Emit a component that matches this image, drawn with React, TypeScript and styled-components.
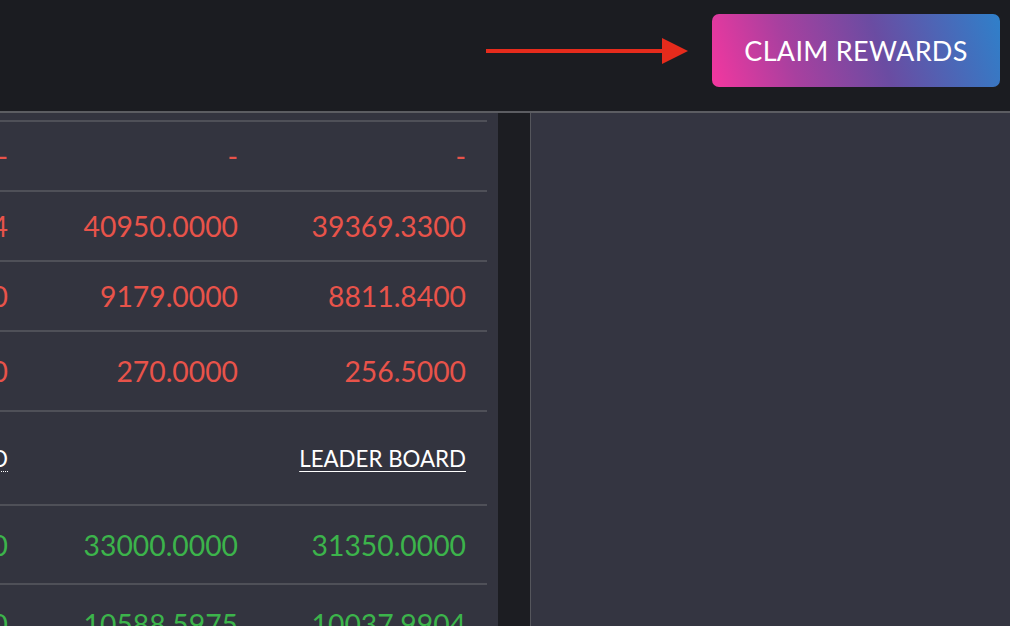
import React from 'react'
import styled, { createGlobalStyle } from 'styled-components'

const GlobalStyle = createGlobalStyle`
    html, body {
        margin: 0;
        padding: 0;
        background: #1b1c21;
        overflow: hidden;
    }
    * {
        box-sizing: border-box;
    }
`

const font = `Lato, 'Open Sans', 'Noto Sans', sans-serif`

const Page = styled.div`
    display: flex;
    flex-direction: column;
    height: 626px;
    font-family: ${font};
`

const Header = styled.header`
    display: flex;
    justify-content: flex-end;
    align-items: flex-start;
    gap: 24px;
    height: 113px;
    padding: 14px 10px 0 0;
    background: #1b1c21;
    border-bottom: 2px solid #5c5d62;
    flex-shrink: 0;
`

const Arrow = styled.svg`
    margin-top: 24px;
    display: block;
`

const ClaimButton = styled.button`
    width: 288px;
    height: 73px;
    border: none;
    border-radius: 7px;
    background: linear-gradient(72deg, #f4379f 0%, #a8409f 28%, #6a4ca2 58%, #2f80ca 100%);
    color: #fff;
    font-family: ${font};
    font-size: 27px;
    font-weight: 400;
    letter-spacing: 0.3px;
    cursor: pointer;
`

const Main = styled.main`
    display: flex;
    flex: 1;
    overflow: hidden;
`

const LeftPanel = styled.section`
    width: 498px;
    padding-right: 11px;
    background: #33343f;
    overflow: hidden;
`

const Gutter = styled.div`
    width: 33px;
    background: #1c1d22;
    border-right: 1px solid #55565c;
`

const RightPanel = styled.section`
    flex: 1;
    background: #343541;
`

const TopEdge = styled.div`
    height: 9px;
    border-bottom: 2px solid #4f5058;
`

const Row = styled.div<{ h: number }>`
    display: grid;
    grid-template-columns: 8px 230px 228px;
    align-items: center;
    height: ${p => p.h}px;
    padding-right: 21px;
    border-bottom: 2px solid #4f5058;
`

const Cell = styled.div<{ tone: 'red' | 'green' | 'white' }>`
    display: flex;
    justify-content: flex-end;
    white-space: nowrap;
    font-size: 28.3px;
    color: ${p => (p.tone === 'red' ? '#e8534a' : p.tone === 'green' ? '#3cb44b' : '#ffffff')};
`

const Link = styled.a<{ dotted?: boolean }>`
    color: #ffffff;
    font-size: 22.3px;
    text-decoration: underline;
    text-decoration-style: ${p => (p.dotted ? 'dotted' : 'solid')};
    text-underline-offset: 4px;
    text-decoration-thickness: 1px;
    cursor: pointer;
`

type Tone = 'red' | 'green' | 'white'

const rows: { h: number; tone: Tone; values: string[] }[] = [
    { h: 70, tone: 'red', values: ['-', '-', '-'] },
    { h: 70, tone: 'red', values: ['41334.1484', '40950.0000', '39369.3300'] },
    { h: 70, tone: 'red', values: ['9320.5500', '9179.0000', '8811.8400'] },
    { h: 80, tone: 'red', values: ['274.0500', '270.0000', '256.5000'] },
]

const greenRows: { h: number; values: string[] }[] = [
    { h: 79, values: ['33440.0000', '33000.0000', '31350.0000'] },
    { h: 79, values: ['10730.1100', '10588.5975', '10037.9904'] },
]

export default function App() {
    return (
        <Page>
            <GlobalStyle />
            <Header>
                <Arrow width="202" height="26" viewBox="0 0 202 26">
                    <rect x="0" y="11" width="180" height="4" fill="#e62b1c" />
                    <polygon points="176,0 202,13 176,26" fill="#e62b1c" />
                </Arrow>
                <ClaimButton>CLAIM REWARDS</ClaimButton>
            </Header>
            <Main>
                <LeftPanel>
                    <TopEdge />
                    {rows.map((r, i) => (
                        <Row key={i} h={r.h}>
                            {r.values.map((v, j) => (
                                <Cell key={j} tone={r.tone}>
                                    {v}
                                </Cell>
                            ))}
                        </Row>
                    ))}
                    <Row h={94}>
                        <Cell tone="white">
                            <Link dotted>REWARD</Link>
                        </Cell>
                        <Cell tone="white" />
                        <Cell tone="white">
                            <Link>LEADER BOARD</Link>
                        </Cell>
                    </Row>
                    {greenRows.map((r, i) => (
                        <Row key={i} h={r.h}>
                            {r.values.map((v, j) => (
                                <Cell key={j} tone="green">
                                    {v}
                                </Cell>
                            ))}
                        </Row>
                    ))}
                </LeftPanel>
                <Gutter />
                <RightPanel />
            </Main>
        </Page>
    )
}
